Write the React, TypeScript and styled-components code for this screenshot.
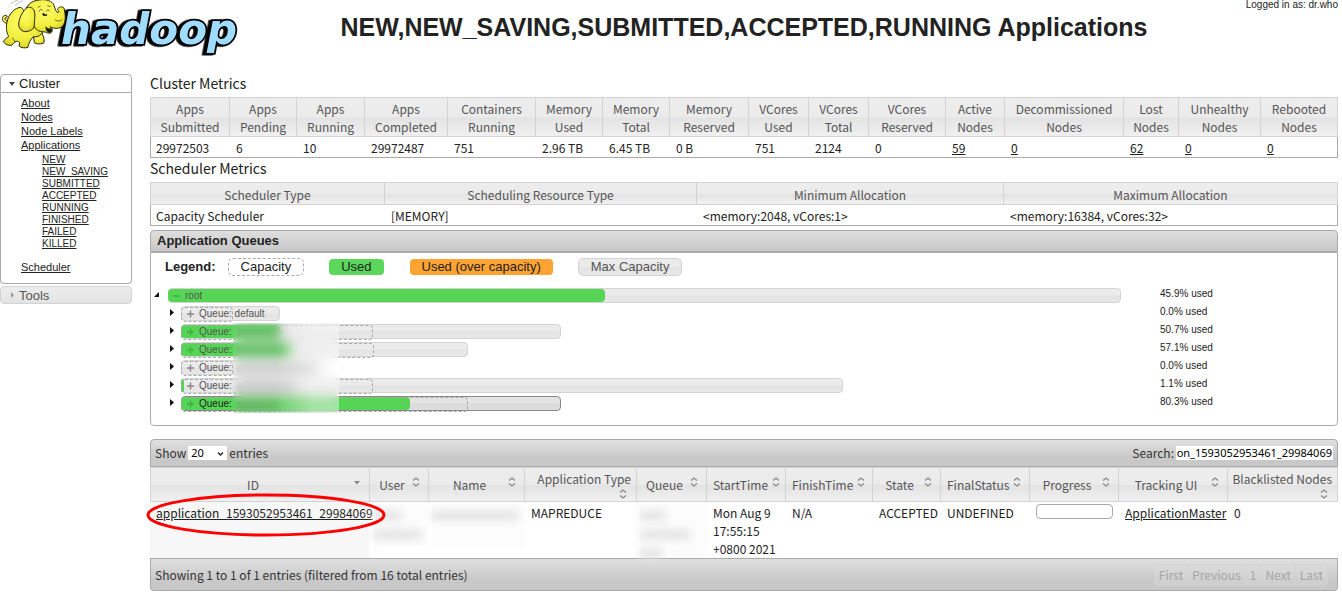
import React, { useEffect, useRef } from "react";
import styled, { createGlobalStyle, css } from "styled-components";

const ARIAL = `"Liberation Sans", Arial, sans-serif`;
const HANS = `"Noto Sans CJK SC", "Noto Sans", sans-serif`;

const shade = "linear-gradient(#ededed 0, #ebebeb 50%, #e3e3e3 52%, #f0f0f0 100%)";
const barShade = "linear-gradient(#ebebeb 0, #ebebeb 48%, #e3e3e3 52%, #e8e8e8 100%)";

const GlobalStyle = createGlobalStyle`
  * { box-sizing: border-box; }
  body { margin: 0; background: #fff; color: #222; font: 12px/18px ${HANS}; }
  a { color: #222; text-decoration: underline; }
`;

const Page = styled.div`
  padding: 0 4px 3px 0;
`;

const Columns = styled.div`
  display: grid;
  grid-template-columns: 132px minmax(0, 1fr);
  column-gap: 18px;
`;

/* ---------- header ---------- */

const Header = styled.header`
  display: grid;
  grid-template-columns: 150px minmax(0, 1fr);
  min-height: 73px;
`;

const Logo = styled.a`
  display: block;
  svg { display: block; overflow: visible; }
`;

const Wordmark = styled.text`
  font: italic 700 126px "DejaVu Sans", sans-serif;
  fill: #a0dcff;
  stroke: #000;
  stroke-width: 11px;
  stroke-linejoin: miter;
  paint-order: stroke;
  filter: drop-shadow(-8px 2px 0 #000);
`;

const Heading = styled.div`
  display: flex;
  flex-direction: column;
  font-family: ${ARIAL};
`;

const UserLine = styled.div`
  font-size: 10px;
  line-height: 10px;
  text-align: right;
`;

const Title = styled.h1`
  margin: 0;
  font-size: 25px;
  line-height: 34px;
  text-align: center;
`;

/* ---------- sidebar ---------- */

const Sidebar = styled.nav`
  padding-top: 1px;
  font-family: ${ARIAL};
  display: flex;
  flex-direction: column;
  gap: 2px;
`;

const SideHeader = styled.button<{ $open?: boolean }>`
  display: flex;
  align-items: center;
  gap: 3px;
  width: 100%;
  height: ${(p) => (p.$open ? 19 : 18)}px;
  padding: 0 0 0 7px;
  font: 13px/17px ${ARIAL};
  color: ${(p) => (p.$open ? "#212121" : "#555")};
  background: ${(p) => (p.$open ? "#fff" : "linear-gradient(#ededed, #e3e3e3)")};
  border: 1px solid ${(p) => (p.$open ? "#aaa" : "#d3d3d3")};
  border-radius: ${(p) => (p.$open ? "4px 4px 0 0" : "4px")};
`;

const SideBody = styled.div`
  padding: 3px 0 9px 20px;
  border: 1px solid #aaa;
  border-top: 0;
  border-radius: 0 0 4px 4px;
`;

const SideList = styled.ul<{ $nested?: boolean }>`
  list-style: none;
  margin: 0;
  padding: 0;
  font-size: 11px;
  line-height: 14px;
  ${(p) =>
    p.$nested &&
    css`
      padding: 2px 0 10px 21px;
      font-size: 10px;
      line-height: 12px;
    `}
`;

/* ---------- tables ---------- */

const SectionTitle = styled.h2`
  margin: 0 0 4px;
  font-size: 14px;
  font-weight: 400;
  line-height: 20px;
`;

const Table = styled.table`
  width: 100%;
  table-layout: fixed;
  border-collapse: separate;
  border-spacing: 0;
`;

const Th = styled.th`
  height: 23px;
  padding: 2px 1px 0;
  font-weight: 400;
  color: #555;
  background: ${shade};
  border: 1px solid #d3d3d3;
  border-right-width: 0;
  &:last-child { border-right-width: 1px; }
`;

const Td = styled.td<{ $open?: boolean; $sorted?: boolean }>`
  padding: 2px 0 0 7px;
  vertical-align: top;
  border: 0 solid #aaa;
  border-bottom-width: 1px;
  background: ${(p) => (p.$sorted ? "#f7f7f7" : "transparent")};
  &:first-child { padding-left: ${(p) => (p.$open ? 6 : 5)}px; border-left-width: ${(p) => (p.$open ? 0 : 1)}px; }
  &:last-child { border-right-width: ${(p) => (p.$open ? 0 : 1)}px; }
`;

/* ---------- queues ---------- */

const QueuePanel = styled.section`
  margin-top: 4px;
  font-family: ${ARIAL};
`;

const QueueTitle = styled.h2`
  margin: 0;
  height: 22px;
  padding: 0 6px;
  font-size: 13px;
  line-height: 20px;
  background: linear-gradient(#dedede, #c8c8c8);
  border: 1px solid #aaa;
  border-radius: 4px 4px 0 0;
`;

const QueueBody = styled.div`
  padding: 5px 0 11px;
  border: 1px solid #aaa;
  border-radius: 0 0 4px 4px;
`;

const Legend = styled.div`
  display: flex;
  align-items: center;
  gap: 24px;
  padding-left: 14px;
  margin-bottom: 12px;
  font-size: 13px;
  line-height: 16px;
`;

const LegendLabel = styled.strong`
  margin-right: -12px;
`;

const Swatch = styled.span<{ $kind: "cap" | "used" | "over" | "max" }>`
  padding: 0 12px;
  border: 1px solid transparent;
  border-radius: 5px;
  background-clip: padding-box;
  ${(p) => p.$kind === "cap" && css`border: 1px dashed #aaa;`}
  ${(p) => p.$kind === "used" && css`background-color: #5bd75b;`}
  ${(p) => p.$kind === "over" && css`background-color: #ffa333;`}
  ${(p) => p.$kind === "max" && css`background: ${barShade}; border-color: #d3d3d3; color: #555;`}
`;

const Tree = styled.div`
  position: relative;
`;

const QueueRow = styled.div<{ $child?: boolean }>`
  display: grid;
  grid-template-columns: ${(p) => (p.$child ? 30 : 17)}px minmax(0, 1fr) 216px;
  height: 18px;
  > svg { margin: 3px 0 0 ${(p) => (p.$child ? 18 : 2)}px; }
`;

const Lane = styled.div`
  position: relative;
  height: 15px;
`;

const MaxBar = styled.div<{ $dark?: boolean }>`
  height: 15px;
  background: ${(p) => (p.$dark ? "linear-gradient(#e3e3e3 48%, #dadada 52%, #dedede)" : barShade)};
  border: 1px solid ${(p) => (p.$dark ? "#888" : "#d3d3d3")};
  border-radius: 4px;
`;

const UsedBar = styled.div`
  position: absolute;
  left: 0;
  top: 1px;
  height: 13px;
  background: #56d456;
  border-radius: 4px;
`;

const CapBar = styled.div`
  position: absolute;
  left: 0;
  top: 1px;
  height: 15px;
  border: 1px dashed #aaa;
  border-radius: 4px;
`;

const QueueName = styled.span<{ $dark?: boolean; $root?: boolean }>`
  position: absolute;
  left: ${(p) => (p.$root ? 5 : 6)}px;
  top: 1px;
  display: flex;
  align-items: center;
  gap: 5px;
  font-size: 10px;
  line-height: 14px;
  color: ${(p) => (p.$dark ? "#222" : "#555")};
`;

const Redacted = styled.i<{ $w: number }>`
  width: ${(p) => p.$w}px;
  height: 7px;
  background: rgba(60, 60, 60, 0.25);
`;

const Percent = styled.div`
  padding-left: 39px;
  font-size: 10px;
  line-height: 11px;
`;

const Frost = styled.div`
  position: absolute;
  left: 82px;
  top: 35px;
  width: 106px;
  height: 90px;
  background: linear-gradient(90deg, rgba(255, 255, 255, 0) 40%, rgba(255, 255, 255, 0.4) 75%);
  backdrop-filter: blur(6px);
`;

/* ---------- applications ---------- */

const Toolbar = styled.div<{ $bottom?: boolean }>`
  display: flex;
  justify-content: space-between;
  align-items: center;
  height: ${(p) => (p.$bottom ? 32 : 28)}px;
  padding: 0 4px;
  color: #333;
  background: linear-gradient(#e0e0e0, #c8c8c8 70%);
  border: 1px solid #aaa;
  border-radius: 4px 4px 0 0;
  ${(p) => p.$bottom && css`border-top: 0; border-radius: 0 0 4px 4px; padding-right: 9px;`}
`;

const Control = styled.label`
  display: flex;
  align-items: center;
  gap: 2px;
`;

const SelectBox = styled.span`
  position: relative;
  display: inline-flex;
  svg { position: absolute; right: 3px; top: 5px; pointer-events: none; }
`;

const Select = styled.select`
  appearance: none;
  width: 39px;
  height: 14px;
  padding: 0 3px;
  border: 0;
  background: #fff;
  color: #000;
  font: 11px/14px "Noto Sans", ${HANS};
`;

const Search = styled.input`
  width: 157px;
  height: 14px;
  padding: 0 1px;
  border: 0;
  background: #fff;
  color: #000;
  font: 11px/14px "Noto Sans", ${HANS};
`;

const AppsPanel = styled.section`
  margin-top: 13px;
`;

const HeadCell = styled.div<{ $stacked?: boolean }>`
  display: flex;
  min-height: 18px;
  justify-content: space-between;
  padding: 0 3px 1px 5px;
  span { flex: 1; }
  svg { flex: none; margin: 0 2px; }
  ${(p) =>
    p.$stacked &&
    css`
      flex-direction: column;
      align-items: flex-end;
      padding-right: 4px;
      white-space: nowrap;
    `}
`;

const IdCell = styled.div`
  position: relative;
`;

const Ring = styled.svg`
  position: absolute;
  z-index: 1;
  left: -10px;
  top: -11px;
  pointer-events: none;
`;

const BlurBlock = styled.div<{ $tall?: boolean }>`
  display: flex;
  flex-direction: column;
  gap: 10px;
  margin-left: -3px;
  padding-top: 7px;
  height: ${(p) => (p.$tall ? 54 : 42)}px;
  background: #fcfcfc;
`;

const Smudge = styled.i<{ $w: number }>`
  width: ${(p) => p.$w}px;
  height: 9px;
  background: #e2e2e2;
  filter: blur(4px);
`;

const Progress = styled.div`
  width: 77px;
  height: 15px;
  border: 1px solid #aaa;
  border-radius: 4px;
  background: #fff;
`;

const Pager = styled.div`
  display: flex;
  border: 1px solid #d2d2d2;
  border-radius: 4px;
`;

const PageButton = styled.button`
  height: 20px;
  padding: 0 4px;
  border: 0;
  border-right: 1px solid #d2d2d2;
  background: rgba(225, 225, 225, 0.3);
  color: #a6a6a6;
  font: 12px/18px ${HANS};
  &:last-child { border-right: 0; }
`;

/* ---------- drawings ---------- */

const HadoopLogo = () => (
  <svg width="240" height="55" viewBox="0 0 720 165" role="img" aria-label="hadoop">
    <defs>
      <radialGradient id="skin" cx="45%" cy="35%" r="70%">
        <stop offset="0" stopColor="#fdfb6a" />
        <stop offset="0.65" stopColor="#f1ee3c" />
        <stop offset="1" stopColor="#d5cd22" />
      </radialGradient>
    </defs>
    <Wordmark x="183" y="133">hadoop</Wordmark>
    <g stroke="#2b2a10" strokeWidth="3" strokeLinejoin="round" strokeLinecap="round" fill="url(#skin)">
      <path d="M24 70 C12 70 5 62 8 52 C10 46 17 44 21 48 C23 52 19 56 15 54 C13 59 20 64 28 62" />
      <path d="M100 104 L103 128 C106 133 128 133 132 128 C135 117 128 104 124 96 Z" />
      <path d="M62 22 C45 22 26 42 21 66 C16 90 23 103 26 110 C20 114 11 120 10 125 C16 134 26 137 35 136 L42 128 C48 122 54 123 59 128 L57 138 C63 144 76 145 84 142 C86 130 90 120 100 110 C116 112 124 105 128 96 Z" />
      <path d="M80 23 C86 10 98 2 118 0 C138 -4 157 3 162 16 C166 29 168 36 174 38 C178 37 177 32 172 28 C176 20 186 18 192 24 C197 46 198 66 188 78 C180 87 162 87 150 80 C156 84 158 88 156 95 C153 101 142 101 138 96 C120 96 110 92 103 80 C92 62 78 40 80 23 Z" />
      <path d="M138 82 C142 86 147 88 153 86 C158 91 155 97 147 97 C141 95 138 90 138 82 Z" fill="#171608" />
      <path d="M80 23 C68 34 55 56 56 76 C58 88 66 94 76 95 C90 94 102 88 103 77 C102 60 108 45 102 30 C98 23 88 19 80 23 Z" />
      <g fill="none" strokeWidth="2">
        <path d="M118 34 C119 27 125 26 128 31" />
        <path d="M139 33 C142 28 147 29 149 33" />
        <path d="M114 22 L121 18" />
        <path d="M143 18 L150 19" />
        <path d="M166 60 C171 64 179 64 184 60" />
        <path d="M38 114 L46 127" />
      </g>
      <path d="M126 42 L131 39 L137 44 L142 41 L140 48 L130 47 Z" fill="#171608" stroke="none" />
      <path d="M34 11 C44 2 54 0 60 -2" fill="none" stroke="#999" strokeWidth="2" />
      <path d="M46 17 C52 10 60 5 68 3" fill="none" stroke="#999" strokeWidth="2" />
    </g>
  </svg>
);

const Twisty = ({ open }: { open?: boolean }) => (
  <svg width="8" height="8" viewBox="0 0 8 8">
    <path d={open ? "M1 2H7L4 6Z" : "M3 1V7L6 4Z"} fill={open ? "#454545" : "#999"} />
  </svg>
);

const TreeArrow = ({ open }: { open?: boolean }) => (
  <svg width="8" height="8" viewBox="0 0 8 8">
    <path d={open ? "M6 1V6H1Z" : "M1 0V7L5 3.5Z"} fill="#111" />
  </svg>
);

const PlusMinus = ({ minus, green }: { minus?: boolean; green?: boolean }) => (
  <svg width="7" height="8" viewBox="0 0 7 8">
    <path d={minus ? "M0 4H7" : "M0 4H7M3.5 0.5V7.5"} stroke={green ? "#3fae3f" : "#888"} strokeWidth="1.4" />
  </svg>
);

const SortIcon = ({ desc }: { desc?: boolean }) => (
  <svg width="12" height="12" viewBox="0 0 12 12">
    {desc ? (
      <path d="M3 5H9L6 8.5Z" fill="#888" />
    ) : (
      <path d="M3 4.5L6 2L9 4.5M3 7.5L6 10L9 7.5" fill="none" stroke="#888" strokeWidth="1.3" />
    )}
  </svg>
);

/* ---------- data ---------- */

const metrics: [string, string, string, number, boolean?][] = [
  ["Apps", "Submitted", "29972503", 79],
  ["Apps", "Pending", "6", 67],
  ["Apps", "Running", "10", 68],
  ["Apps", "Completed", "29972487", 83],
  ["Containers", "Running", "751", 88],
  ["Memory", "Used", "2.96 TB", 67],
  ["Memory", "Total", "6.45 TB", 67],
  ["Memory", "Reserved", "0 B", 79],
  ["VCores", "Used", "751", 60],
  ["VCores", "Total", "2124", 60],
  ["VCores", "Reserved", "0", 77],
  ["Active", "Nodes", "59", 59, true],
  ["Decommissioned", "Nodes", "0", 119, true],
  ["Lost", "Nodes", "62", 55, true],
  ["Unhealthy", "Nodes", "0", 82, true],
  ["Rebooted", "Nodes", "0", 78, true],
];

const scheduler: [string, string, number][] = [
  ["Scheduler Type", "Capacity Scheduler", 234],
  ["Scheduling Resource Type", "[MEMORY]", 312],
  ["Minimum Allocation", "<memory:2048, vCores:1>", 307],
  ["Maximum Allocation", "<memory:16384, vCores:32>", 335],
];

type Queue = { name?: string; hidden?: number; max: number; cap: number; used: number; pct: string; dark?: boolean };

const queues: Queue[] = [
  { name: "default", max: 10.5, cap: 5.5, used: 0, pct: "0.0%" },
  { hidden: 45, max: 40.4, cap: 20.4, used: 10.5, pct: "50.7%" },
  { hidden: 48, max: 30.5, cap: 20.5, used: 11.7, pct: "57.1%" },
  { hidden: 78, max: 15, cap: 5.5, used: 0, pct: "0.0%" },
  { hidden: 60, max: 70.4, cap: 20.4, used: 0.3, pct: "1.1%" },
  { hidden: 40, max: 40.4, cap: 30.5, used: 24.4, pct: "80.3%", dark: true },
];

const appColumns: [string, number, boolean?][] = [
  ["ID", 219],
  ["User", 59],
  ["Name", 96],
  ["Application Type", 112, true],
  ["Queue", 70],
  ["StartTime", 79],
  ["FinishTime", 87],
  ["State", 68],
  ["FinalStatus", 89],
  ["Progress", 89],
  ["Tracking UI", 109],
  ["Blacklisted Nodes", 111, true],
];

const states = ["NEW", "NEW_SAVING", "SUBMITTED", "ACCEPTED", "RUNNING", "FINISHED", "FAILED", "KILLED"];

const percent = (n: number) => ({ width: `${n}%` });

export default function App() {
  const search = useRef<HTMLInputElement>(null);
  useEffect(() => {
    if (search.current) search.current.scrollLeft = search.current.scrollWidth;
  }, []);

  return (
    <Page>
      <GlobalStyle />
      <Header>
        <Logo href="#"><HadoopLogo /></Logo>
        <Heading>
          <UserLine>Logged in as: dr.who</UserLine>
          <Title>NEW,NEW_SAVING,SUBMITTED,ACCEPTED,RUNNING Applications</Title>
        </Heading>
      </Header>
      <Columns>
        <Sidebar>
          <div>
            <SideHeader $open><Twisty open />Cluster</SideHeader>
            <SideBody>
              <SideList>
                <li><a href="#">About</a></li>
                <li><a href="#">Nodes</a></li>
                <li><a href="#">Node Labels</a></li>
                <li>
                  <a href="#">Applications</a>
                  <SideList $nested>
                    {states.map((s) => <li key={s}><a href="#">{s}</a></li>)}
                  </SideList>
                </li>
                <li><a href="#">Scheduler</a></li>
              </SideList>
            </SideBody>
          </div>
          <SideHeader><Twisty />Tools</SideHeader>
        </Sidebar>

        <main>
          <SectionTitle>Cluster Metrics</SectionTitle>
          <Table>
            <colgroup>{metrics.map((m, i) => <col key={i} width={m[3]} />)}</colgroup>
            <thead>
              <tr>{metrics.map((m, i) => <Th key={i}>{m[0]}<br />{m[1]}</Th>)}</tr>
            </thead>
            <tbody>
              <tr>{metrics.map((m, i) => <Td key={i}>{m[4] ? <a href="#">{m[2]}</a> : m[2]}</Td>)}</tr>
            </tbody>
          </Table>

          <SectionTitle>Scheduler Metrics</SectionTitle>
          <Table>
            <colgroup>{scheduler.map((s) => <col key={s[0]} width={s[2]} />)}</colgroup>
            <thead><tr>{scheduler.map((s) => <Th key={s[0]}>{s[0]}</Th>)}</tr></thead>
            <tbody><tr>{scheduler.map((s) => <Td key={s[0]}>{s[1]}</Td>)}</tr></tbody>
          </Table>

          <QueuePanel>
            <QueueTitle>Application Queues</QueueTitle>
            <QueueBody>
              <Legend>
                <LegendLabel>Legend:</LegendLabel>
                <Swatch $kind="cap">Capacity</Swatch>
                <Swatch $kind="used">Used</Swatch>
                <Swatch $kind="over">Used (over capacity)</Swatch>
                <Swatch $kind="max">Max Capacity</Swatch>
              </Legend>
              <Tree>
                <QueueRow>
                  <TreeArrow open />
                  <Lane>
                    <MaxBar />
                    <UsedBar style={percent(45.9)} />
                    <QueueName $root><PlusMinus minus green />root</QueueName>
                  </Lane>
                  <Percent>45.9% used</Percent>
                </QueueRow>
                {queues.map((q, i) => (
                  <QueueRow key={i} $child>
                    <TreeArrow />
                    <Lane>
                      <MaxBar $dark={q.dark} style={percent(q.max)} />
                      {q.used > 0 && <UsedBar style={percent(q.used)} />}
                      <CapBar style={percent(q.cap)} />
                      <QueueName $dark={q.dark}>
                        <PlusMinus green={q.used > 1} />
                        {q.name ? `Queue: ${q.name}` : "Queue:"}
                        {q.hidden && <Redacted $w={q.hidden} />}
                      </QueueName>
                    </Lane>
                    <Percent>{q.pct} used</Percent>
                  </QueueRow>
                ))}
                <Frost />
              </Tree>
            </QueueBody>
          </QueuePanel>

          <AppsPanel>
            <Toolbar>
              <Control>
                Show
                <SelectBox>
                  <Select defaultValue="20"><option>20</option></Select>
                  <svg width="7" height="6" viewBox="0 0 7 6">
                    <path d="M1 1.5L3.5 4L6 1.5" fill="none" stroke="#222" strokeWidth="1.4" />
                  </svg>
                </SelectBox>
                entries
              </Control>
              <Control>
                Search:
                <Search ref={search} type="text" defaultValue="application_1593052953461_29984069" />
              </Control>
            </Toolbar>
            <Table>
              <colgroup>{appColumns.map((c) => <col key={c[0]} width={c[1]} />)}</colgroup>
              <thead>
                <tr>
                  {appColumns.map(([label, , stacked], i) => (
                    <Th key={label}>
                      <HeadCell $stacked={stacked}><span>{label}</span><SortIcon desc={i === 0} /></HeadCell>
                    </Th>
                  ))}
                </tr>
              </thead>
              <tbody>
                <tr>
                  <Td $open $sorted>
                    <IdCell>
                      <a href="#">application_1593052953461_29984069</a>
                      <Ring width="240" height="44" viewBox="0 0 240 44">
                        <ellipse cx="120" cy="22" rx="118" ry="20" fill="none" stroke="#f00" strokeWidth="3" />
                      </Ring>
                    </IdCell>
                  </Td>
                  <Td $open><BlurBlock><Smudge $w={28} /><Smudge $w={48} /></BlurBlock></Td>
                  <Td $open><BlurBlock><Smudge $w={86} /></BlurBlock></Td>
                  <Td $open>MAPREDUCE</Td>
                  <Td $open><BlurBlock $tall><Smudge $w={26} /><Smudge $w={50} /><Smudge $w={22} /></BlurBlock></Td>
                  <Td $open>Mon Aug 9<br />17:55:15<br />+0800 2021</Td>
                  <Td $open>N/A</Td>
                  <Td $open>ACCEPTED</Td>
                  <Td $open>UNDEFINED</Td>
                  <Td $open><Progress role="progressbar" aria-label="Progress" aria-valuenow={0} /></Td>
                  <Td $open><a href="#">ApplicationMaster</a></Td>
                  <Td $open>0</Td>
                </tr>
              </tbody>
            </Table>
            <Toolbar $bottom>
              <span>Showing 1 to 1 of 1 entries (filtered from 16 total entries)</span>
              <Pager>
                {["First", "Previous", "1", "Next", "Last"].map((p) => <PageButton key={p}>{p}</PageButton>)}
              </Pager>
            </Toolbar>
          </AppsPanel>
        </main>
      </Columns>
    </Page>
  );
}
